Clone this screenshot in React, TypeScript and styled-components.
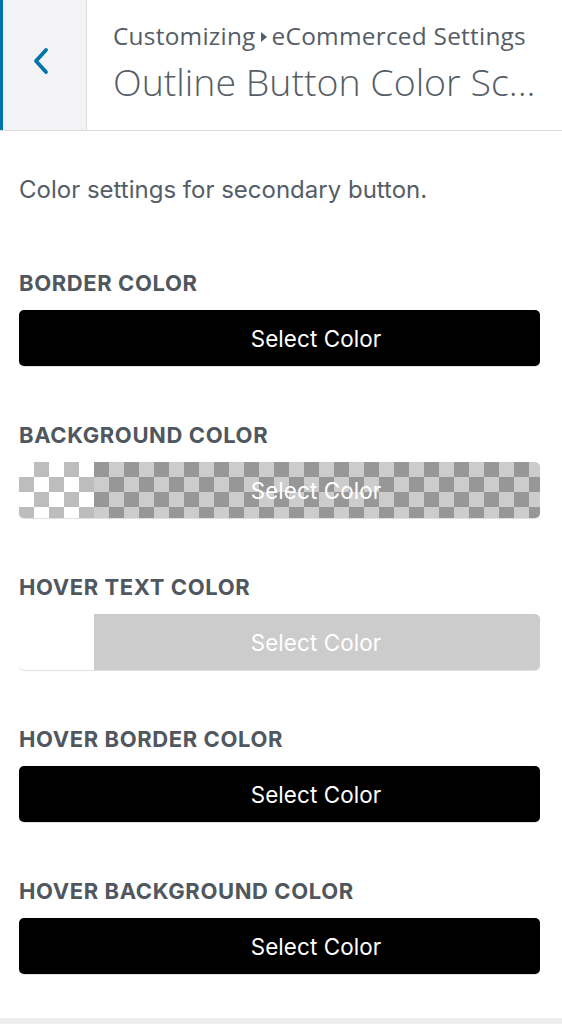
import React from "react";
import styled, { createGlobalStyle, css } from "styled-components";

const Global = createGlobalStyle`
  html, body { margin: 0; padding: 0; background: #fff; }
  body { width: 562px; height: 1024px; overflow: hidden; }
`;

const Page = styled.div`
  width: 562px;
  height: 1024px;
  display: flex;
  flex-direction: column;
  background: #fff;
`;

const Header = styled.header`
  display: flex;
  height: 130px;
  border-bottom: 1px solid #dcdcde;
  background: #fff;
  flex-shrink: 0;
`;

const BackButton = styled.button`
  width: 87px;
  flex-shrink: 0;
  display: flex;
  align-items: center;
  justify-content: center;
  padding: 0 8px 9px 0;
  margin: 0;
  border: 0;
  border-left: 3px solid #0073aa;
  border-right: 1px solid #dcdcde;
  background: #f3f3f5;
  color: #0073aa;
`;

const Titles = styled.div`
  flex: 1;
  min-width: 0;
  padding: 16px 0 0 26px;
  font-family: "Open Sans", sans-serif;
  color: #555d66;
  overflow: hidden;
`;

const Crumb = styled.div`
  font-size: 24.4px;
  line-height: 40px;
  letter-spacing: 0.25px;
  white-space: nowrap;
  display: flex;
  align-items: center;
`;

const Arrow = styled.span`
  display: inline-block;
  width: 0;
  height: 0;
  border-top: 5px solid transparent;
  border-bottom: 5px solid transparent;
  border-left: 6px solid #555d66;
  margin: 1px 5px 0 5px;
`;

const Title = styled.div`
  font-size: 37.5px;
  font-weight: 300;
  line-height: 52px;
  white-space: nowrap;
`;

const Content = styled.main`
  flex: 1;
  padding: 44px 22px 0 19px;
  font-family: Inter, "Liberation Sans", sans-serif;
  color: #555d66;
`;

const Description = styled.p`
  margin: 0 0 63px 0;
  font-size: 24px;
  line-height: 30px;
`;

const Section = styled.section`
  & + & {
    margin-top: 54px;
  }
`;

const Label = styled.h3`
  margin: 0 0 12px 0;
  font-size: 22px;
  font-weight: 700;
  line-height: 30px;
  letter-spacing: 0.6px;
  text-transform: uppercase;
  color: #50575e;
`;

type Kind = "solid" | "transparent";

const checker = css`
  background-image: repeating-conic-gradient(#bdbdbd 0% 25%, #fff 0% 50%);
  background-size: 30px 30px;
  background-position: 0 0;
`;

const ColorButton = styled.button<{ $kind: Kind; $color: string }>`
  display: flex;
  width: 100%;
  height: 56px;
  padding: 0;
  margin: 0;
  border: 0;
  border-radius: 5px;
  overflow: hidden;
  box-shadow: 0 1px 0 rgba(0, 0, 0, 0.12);
  ${(p) => (p.$kind === "transparent" ? checker : `background: ${p.$color};`)}
`;

const Swatch = styled.span`
  width: 75px;
  flex-shrink: 0;
`;

const ButtonText = styled.span`
  flex: 1;
  display: flex;
  align-items: center;
  justify-content: center;
  background: rgba(0, 0, 0, 0.2);
  color: #fff;
  font-family: Inter, "Liberation Sans", sans-serif;
  font-size: 22.4px;
  letter-spacing: 0.1px;
  padding-right: 2px;
`;

const Footer = styled.div`
  height: 6px;
  background: #eeeeee;
  flex-shrink: 0;
`;

const Chevron = () => (
  <svg width="18" height="28" viewBox="0 0 18 28" fill="none">
    <path d="M14 3 L4 14 L14 25" stroke="#0073aa" strokeWidth="3.8" strokeLinecap="round" strokeLinejoin="round" />
  </svg>
);

const settings: { label: string; kind: Kind; color: string }[] = [
  { label: "Border Color", kind: "solid", color: "#000" },
  { label: "Background Color", kind: "transparent", color: "transparent" },
  { label: "Hover Text Color", kind: "solid", color: "#fff" },
  { label: "Hover Border Color", kind: "solid", color: "#000" },
  { label: "Hover Background Color", kind: "solid", color: "#000" },
];

export default function App() {
  return (
    <>
      <Global />
      <Page>
        <Header>
          <BackButton aria-label="Back">
            <Chevron />
          </BackButton>
          <Titles>
            <Crumb>
              Customizing<Arrow />eCommerced Settings
            </Crumb>
            <Title>Outline Button Color Sc...</Title>
          </Titles>
        </Header>
        <Content>
          <Description>Color settings for secondary button.</Description>
          {settings.map((s) => (
            <Section key={s.label}>
              <Label>{s.label}</Label>
              <ColorButton $kind={s.kind} $color={s.color}>
                <Swatch />
                <ButtonText>Select Color</ButtonText>
              </ColorButton>
            </Section>
          ))}
        </Content>
        <Footer />
      </Page>
    </>
  );
}
